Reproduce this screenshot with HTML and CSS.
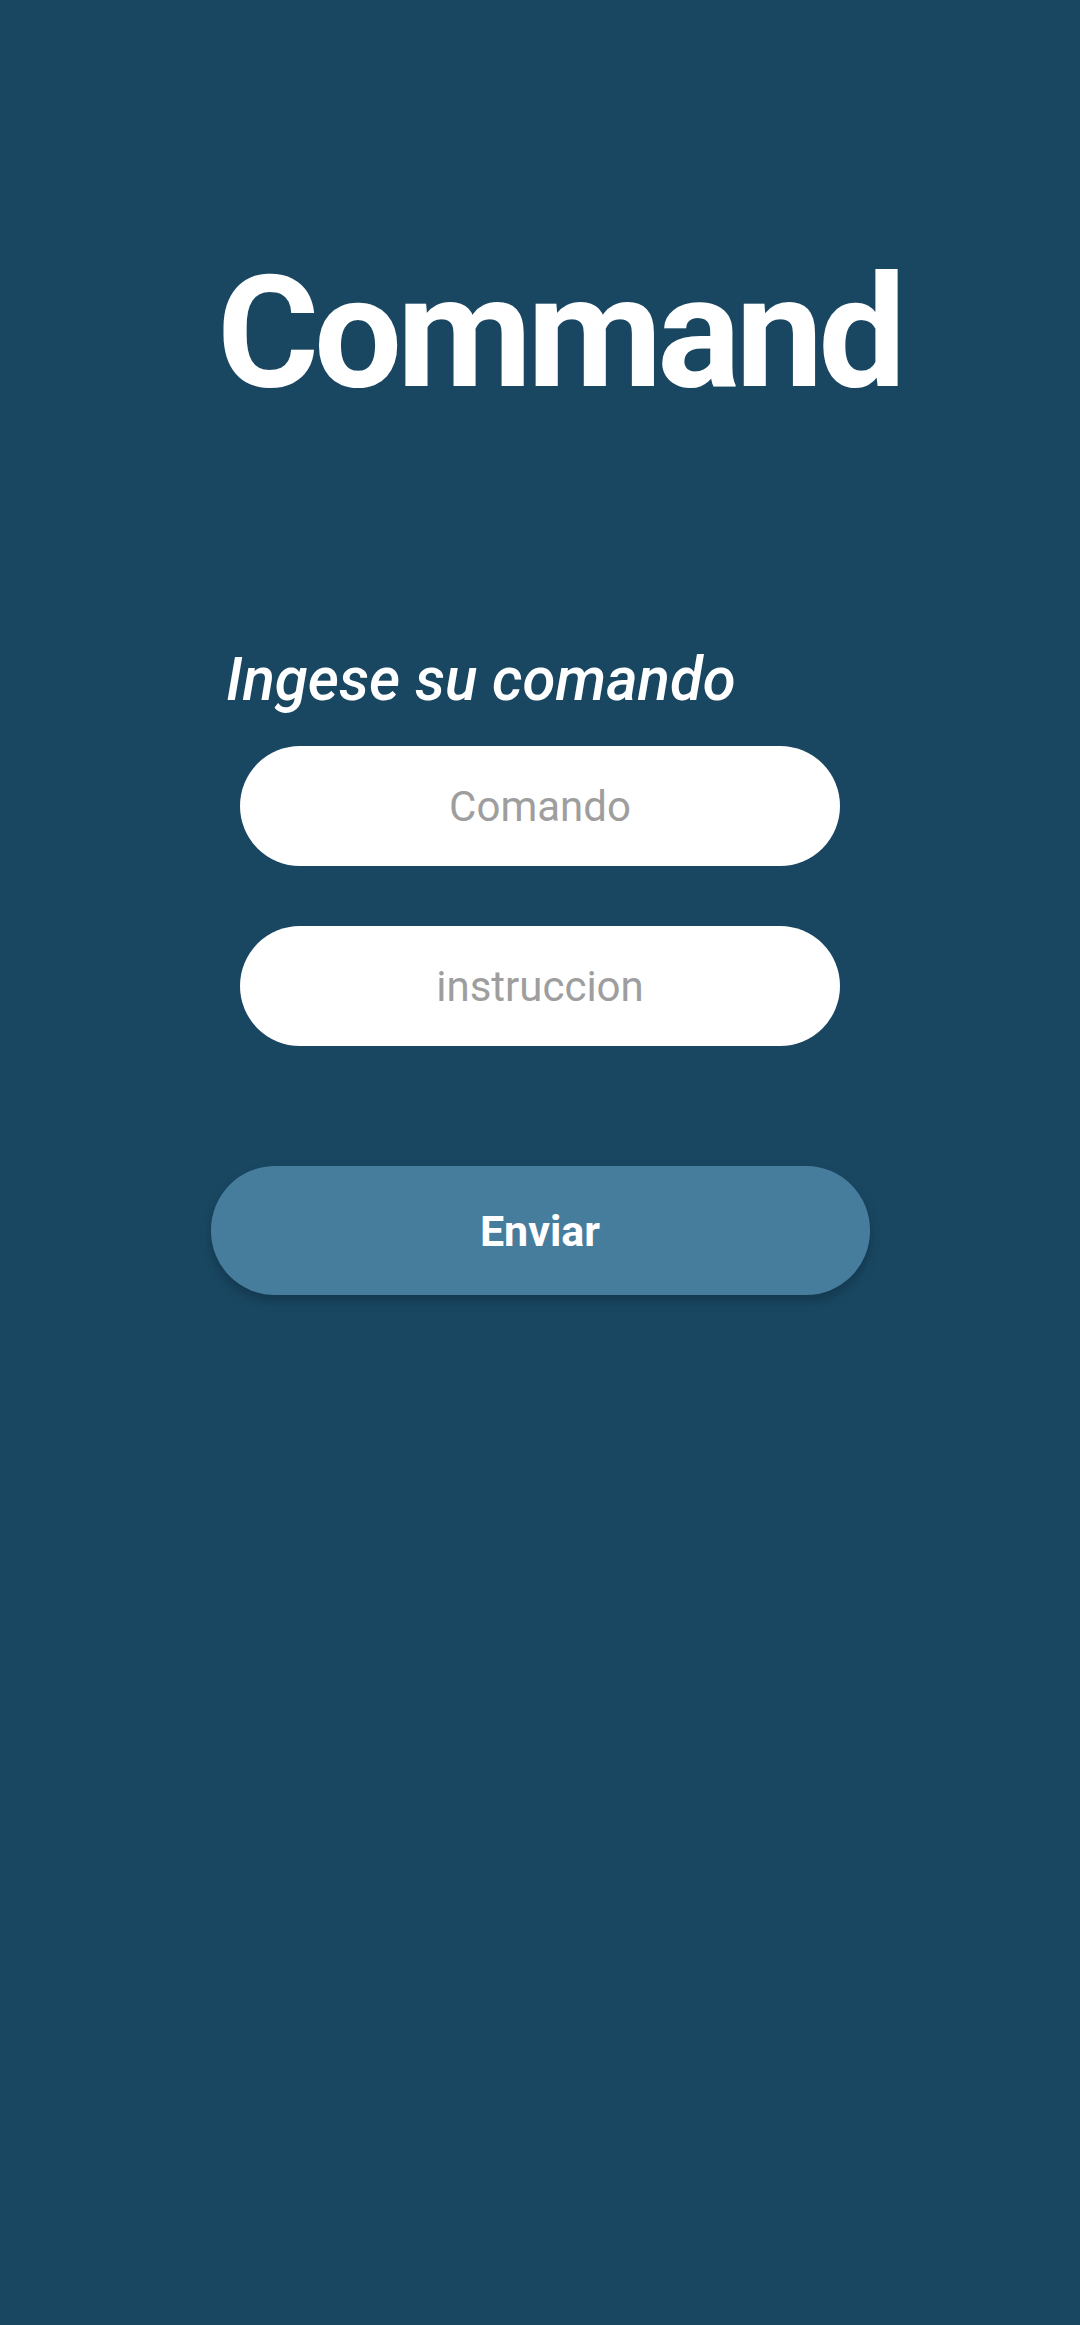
FILE: index.html
```html
<!DOCTYPE html>
<html lang="es">
<head>
<meta charset="utf-8">
<title>Command</title>
<link rel="stylesheet" href="styles.css">
</head>
<body>
<main class="screen">
  <div class="form">
    <h1 class="title">Command</h1>
    <p class="label">Ingese su comando</p>
    <div class="field">Comando</div>
    <div class="field">instruccion</div>
    <div class="button">Enviar</div>
  </div>
</main>
</body>
</html>
```

FILE: styles.css
```css
html, body {
  margin: 0;
  padding: 0;
}
body {
  background: #194762;
  font-family: Roboto, "Liberation Sans", sans-serif;
}
.screen {
  min-height: 2325px;
  display: flex;
  flex-direction: column;
  align-items: center;
}
.form {
  width: 660px;
  padding-top: 255px;
  display: flex;
  flex-direction: column;
  align-items: center;
}
.title {
  margin: 0;
  padding-left: 38px;
  font-size: 156px;
  line-height: 155px;
  font-weight: 700;
  letter-spacing: -5px;
  color: #ffffff;
  text-align: center;
  white-space: nowrap;
}
.label {
  align-self: flex-start;
  margin: 236px 0 32px 16px;
  font-size: 60px;
  line-height: 68px;
  font-style: italic;
  font-weight: 500;
  color: #ffffff;
  white-space: nowrap;
}
.field {
  width: 600px;
  height: 120px;
  border-radius: 60px;
  background: #ffffff;
  display: flex;
  align-items: center;
  justify-content: center;
  font-size: 42px;
  color: #9e9e9e;
}
.field + .field {
  margin-top: 60px;
}
.button {
  margin-top: 120px;
  width: 659px;
  height: 129px;
  border-radius: 64px;
  background: #467d9d;
  box-shadow: 0 6px 12px rgba(0, 0, 0, 0.22);
  display: flex;
  align-items: center;
  justify-content: center;
  font-size: 43px;
  font-weight: 700;
  color: #ffffff;
}
```
